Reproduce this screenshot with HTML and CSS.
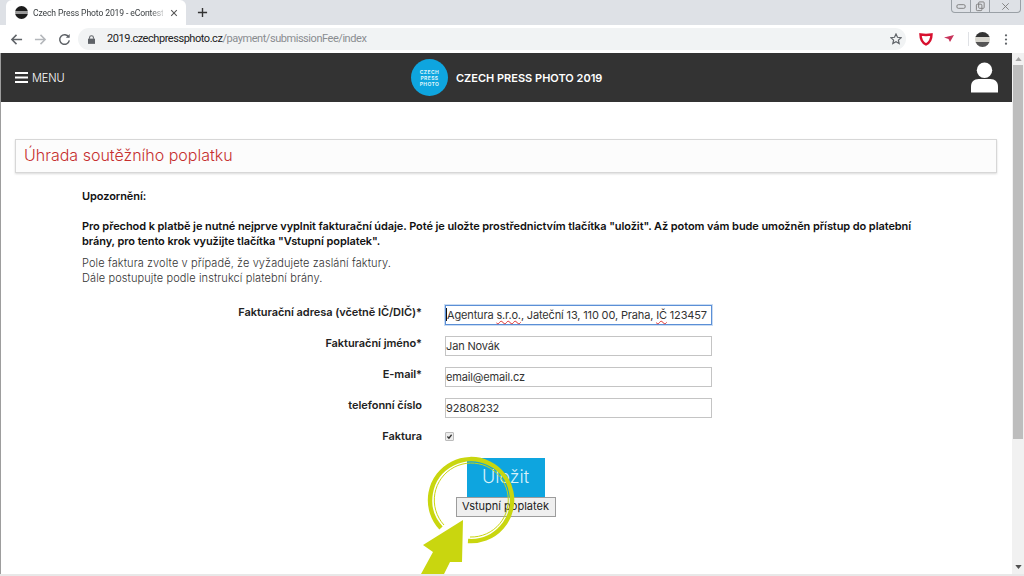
FILE: index.html
```html
<!DOCTYPE html>
<html lang="cs">
<head>
<meta charset="utf-8">
<title>Czech Press Photo 2019 - eContest</title>
<link rel="stylesheet" href="styles.css">
</head>
<body>
<div class="tabstrip">
  <div class="tab">
    <span class="favicon"></span>
    <span class="tab-title">Czech Press Photo 2019 - eContest</span>
    <svg class="tab-close" viewBox="0 0 10 10"><path d="M1.500 1.500l7 7M8.500 1.500l-7 7"/></svg>
  </div>
  <svg class="new-tab" viewBox="0 0 12 12"><path d="M6 1v10M1 6h10"/></svg>
  <div class="win-controls">
    <span class="win-btn"><svg viewBox="0 0 12 8"><rect x="1" y="2" width="9" height="4" rx="1.500"/></svg></span>
    <span class="win-btn"><svg viewBox="0 0 12 12"><rect x="4" y="1" width="6" height="7" rx="1"/><rect x="1.500" y="3.500" width="6" height="7" rx="1"/></svg></span>
    <span class="win-btn win-close"><svg viewBox="0 0 12 12"><path d="M2.500 2.500l7 7M9.500 2.500l-7 7"/></svg></span>
  </div>
</div>
<div class="toolbar">
  <svg class="nav-icon" viewBox="0 0 14 14"><path d="M13 7H2M7 2L2 7l5 5"/></svg>
  <svg class="nav-icon nav-off" viewBox="0 0 14 14"><path d="M1 7h11M7 2l5 5-5 5"/></svg>
  <svg class="nav-icon" viewBox="0 0 14 14"><path d="M11.600 4.400A5.200 5.200 0 1 0 12.200 8"/><path class="fill" d="M8.400 5.200h4.200V1z"/></svg>
  <div class="omnibox">
    <svg class="lock" viewBox="0 0 8 10"><path d="M0 4h8v6H0z"/><path class="lock-arc" d="M1.800 4V2.800a2.200 2.200 0 0 1 4.400 0V4"/></svg>
    <span class="url"><span class="url-host">2019.czechpressphoto.cz</span>/payment/submissionFee/index</span>
    <svg class="star" viewBox="0 0 12 12"><path d="M6 1l1.500 3.300 3.600.4-2.700 2.400.8 3.500L6 8.800l-3.200 1.800.8-3.500L.9 4.700l3.600-.4z"/></svg>
  </div>
  <div class="extensions">
    <svg class="ext-shield" viewBox="0 0 14 14"><path d="M1.500 2.500c3 .5 8 .5 11 0 0 5-1.500 8-5.500 10-4-2-5.500-5-5.500-10z"/></svg>
    <svg class="ext-plane" viewBox="0 0 10 8"><path d="M0 2.500L10 0 6 7 4.500 4z"/></svg>
    <span class="ext-sep"></span>
    <span class="avatar"></span>
    <svg class="kebab" viewBox="0 0 4 14"><circle cx="2" cy="2.500" r="1.200"/><circle cx="2" cy="7" r="1.200"/><circle cx="2" cy="11.500" r="1.200"/></svg>
  </div>
</div>
<div class="viewport">
  <div class="page">
    <header class="site-header">
      <div class="menu">
        <svg class="burger" viewBox="0 0 13 11"><path d="M0 0h13v2H0zM0 4.500h13v2H0zM0 9h13v2H0z"/></svg>
        <span>MENU</span>
      </div>
      <div class="brand">
        <span class="brand-logo">CZECH<br>PRESS<br>PHOTO</span>
        <span class="brand-name">CZECH PRESS PHOTO 2019</span>
      </div>
      <svg class="user" viewBox="0 0 28 31"><circle cx="14" cy="8" r="8"/><path d="M0 31v-6c0-5 3-8 8-8h12c5 0 8 3 8 8v6z"/></svg>
    </header>
    <main class="content">
      <h1 class="title-box">Úhrada soutěžního poplatku</h1>
      <section class="notice">
        <p class="strong first">Upozornění:</p>
        <p class="strong warn">Pro přechod k platbě je nutné nejprve vyplnit fakturační údaje. Poté je uložte prostřednictvím tlačítka "uložit". Až potom vám bude umožněn přístup do platební brány, pro tento krok využijte tlačítka "Vstupní poplatek".</p>
        <p class="info">Pole faktura zvolte v případě, že vyžadujete zaslání faktury.<br>Dále postupujte podle instrukcí platební brány.</p>
      </section>
      <form class="form">
        <label class="label">Fakturační adresa (včetně IČ/DIČ)*</label>
        <div class="field field-focus"><span class="caret"></span>Agentura <span class="typo">s.r.o.</span>, Jateční 13, 110 00, Praha, <span class="typo">IČ</span> 123457</div>
        <label class="label">Fakturační jméno*</label>
        <div class="field">Jan Novák</div>
        <label class="label">E-mail*</label>
        <div class="field">email@email.cz</div>
        <label class="label">telefonní číslo</label>
        <div class="field">92808232</div>
        <label class="label">Faktura</label>
        <div class="check-cell"><span class="check"><svg viewBox="0 0 10 10"><path d="M2 5l2.200 2.500L8 2.500"/></svg></span></div>
      </form>
      <div class="actions">
        <span class="btn-save">Uložit</span>
        <span class="btn-fee">Vstupní poplatek</span>
      </div>
    </main>
    <svg class="annotation" viewBox="0 0 140 134">
      <path class="ring-thick" d="M41 88A41 41 0 1 1 68 101"/>
      <path class="ring-thin" d="M44 85A37 37 0 1 1 70 97"/>
      <path class="arrow" d="M63 80L62 122 50 122 44 134H21L33 112 23 105z"/>
    </svg>
  </div>
  <div class="scrollbar">
    <svg class="sb-arrow sb-up" viewBox="0 0 8 5"><path d="M4 0l4 5H0z"/></svg>
    <div class="sb-track"><div class="sb-thumb"></div></div>
    <svg class="sb-arrow sb-down" viewBox="0 0 8 5"><path d="M4 5L8 0H0z"/></svg>
  </div>
</div>
<div class="bottom-edge"></div>
</body>
</html>
```
FILE: styles.css
```css
* { box-sizing: border-box; }
html, body { margin: 0; padding: 0; height: 100%; overflow: hidden; }
body { display: flex; flex-direction: column; height: 576px; background: #fff; font-family: "Inter", "Liberation Sans", sans-serif; color: #222; }

.tabstrip { height: 25px; flex: none; background: #dee1e6; display: flex; align-items: flex-end; padding-left: 6px; }
.tab { width: 180px; height: 25px; background: #fff; border-radius: 6px 6px 0 0; display: flex; align-items: center; padding: 0 8px 0 9px; }
.favicon { width: 13px; height: 13px; border-radius: 50%; background: linear-gradient(#1c1c1c 0 38%, #9a9a9a 38% 62%, #1c1c1c 62%); flex: none; margin-right: 5px; }
.tab-title { font: 8.600px/12px "Roboto", sans-serif; letter-spacing: -.12px; color: #3c4043; white-space: nowrap; width: 130px; flex: none; -webkit-mask-image: linear-gradient(90deg, #000 90%, rgba(0,0,0,.25)); mask-image: linear-gradient(90deg, #000 90%, rgba(0,0,0,.25)); }
.tab-close { width: 8px; height: 8px; margin-left: 7px; flex: none; }
.tab-close path { stroke: #555; stroke-width: 1.3; fill: none; }
.new-tab { width: 11px; height: 11px; margin: 0 0 7px 11px; flex: none; }
.new-tab path { stroke: #333; stroke-width: 1.5; fill: none; }
.win-controls { margin-left: auto; margin-right: 3px; align-self: flex-start; display: flex; height: 13px; border: 1px solid #9aa0a6; border-top: 0; border-radius: 0 0 4px 4px; }
.win-btn { width: 19px; display: flex; align-items: center; justify-content: center; border-right: 1px solid #9aa0a6; }
.win-close { width: 30px; border-right: 0; }
.win-btn svg { width: 11px; height: 11px; fill: none; stroke: #7c7c7c; stroke-width: 1; }

.toolbar { height: 28px; flex: none; background: #fff; display: flex; align-items: center; padding-left: 10px; }
.nav-icon { width: 13px; height: 13px; margin-right: 11px; flex: none; fill: none; stroke: #5f6368; stroke-width: 1.6; }
.nav-icon:nth-of-type(3) { margin-right: 13px; }
.nav-icon .fill { fill: #5f6368; stroke: none; }
.nav-off { stroke: #b4b7bb; }
.omnibox { width: 828px; margin-left: -6px; height: 22px; background: #f1f3f4; border-radius: 11px; display: flex; align-items: center; padding: 0 4px 0 10px; flex: none; }
.lock { width: 7px; height: 9px; flex: none; margin-right: 12px; fill: #5f6368; }
.lock .lock-arc { fill: none; stroke: #5f6368; stroke-width: 1.2; }
.url { font: 11px/14px "Roboto", sans-serif; color: #8a8d91; letter-spacing: -.45px; }
.url-host { color: #222; }
.star { width: 12px; height: 12px; margin-left: auto; fill: none; stroke: #5f6368; stroke-width: 1.2; }
.extensions { display: flex; align-items: center; flex: none; margin-left: 13px; }
.ext-shield { width: 14px; height: 14px; fill: #fff; stroke: #d8102f; stroke-width: 2.4; margin-right: 11px; }
.ext-plane { width: 10px; height: 8px; fill: #c8335a; margin-right: 14px; }
.ext-sep { width: 1px; height: 14px; background: #dfe1e5; margin-right: 9px; }
.avatar { width: 15px; height: 15px; border-radius: 50%; background: linear-gradient(#333 0 35%, #d8d6cf 35% 65%, #555 65%); margin-right: 14px; margin-left: -3px; }
.kebab { width: 4px; height: 13px; fill: #5f6368; }

.viewport { flex: 1; min-height: 0; display: flex; }
.page { flex: 1; min-width: 0; position: relative; border-left: 1px solid #9d9d9d; overflow: hidden; }
.scrollbar { width: 12px; flex: none; background: #f1f1f1; display: flex; flex-direction: column; align-items: center; padding: 4px 0 5px; }
.sb-arrow { width: 7px; height: 4px; flex: none; }
.sb-up { fill: #a3a3a3; }
.sb-down { fill: #505050; }
.sb-track { flex: 1; width: 100%; padding: 4px 1px; }
.sb-thumb { height: 374px; background: #bdbdbd; }
.bottom-edge { height: 2px; flex: none; background: #e8e8e8; }

.site-header { height: 49px; background: #333; margin-left: -1px; display: flex; align-items: center; color: #fff; position: relative; padding: 0 14px 0 15px; }
.menu { display: flex; align-items: center; gap: 4px; font-size: 11px; font-weight: 300; letter-spacing: -.1px; }
.burger { width: 13px; height: 11px; fill: #fff; }
.brand { position: absolute; left: 411px; top: 6px; display: flex; align-items: center; gap: 8px; }
.brand-logo { width: 37px; height: 37px; border-radius: 50%; background: #0ea5df; color: #dff4fb; font-size: 5px; line-height: 6px; font-weight: 700; letter-spacing: .4px; text-align: center; padding-top: 9.500px; }
.brand-name { font-size: 11px; font-weight: 600; }
.user { width: 27px; height: 31px; margin-left: auto; fill: #fff; }

.title-box { margin: 37px 15px 0 14px; height: 34px; border: 1px solid #d7d7d7; box-shadow: 0 1px 2px rgba(0,0,0,.15); background: #fcfcfc; font-size: 16px; line-height: 31px; font-weight: 300; color: #c62f2f; padding-left: 8px; }

.notice { margin: 16px 85px 0 81px; font-size: 11px; line-height: 15px; }
.notice p { margin: 0; }
.strong { font-weight: 600; color: #111; letter-spacing: -.08px; }
.warn { margin-top: 15px !important; }
.info { margin-top: 7px !important; color: #333; font-weight: 300; letter-spacing: .1px; }

.form { display: grid; grid-template-columns: 421px 267px; column-gap: 23px; row-gap: 11px; margin-top: 19px; align-items: start; }
.label { text-align: right; font-size: 11px; font-weight: 600; line-height: 15px; color: #222; letter-spacing: -.05px; }
.field { height: 20px; border: 1px solid #c4c4c4; padding: 0; font-size: 11px; line-height: 19px; color: #333; white-space: nowrap; position: relative; letter-spacing: -.15px; }
.field-focus { border-color: #5b8fd6; box-shadow: 0 0 0 1px #c9dcf3; }
.caret { display: inline-block; width: 1px; height: 13px; background: #111; vertical-align: -2px; }
.typo { text-decoration: underline wavy #d33; text-decoration-thickness: 1px; }
.check-cell { height: 20px; display: flex; align-items: center; }
.check { width: 9px; height: 9px; background: #ececec; border: 1px solid #bbb; border-radius: 1px; display: block; margin-top: -5px; }
.check svg { display: block; width: 7px; height: 7px; fill: none; stroke: #333; stroke-width: 1.8; }

.actions { display: flex; flex-direction: column; align-items: center; margin-top: 9px; margin-right: 2px; }
.btn-save { width: 78px; height: 39px; background: #0ea5df; color: #d9f1fa; font-size: 18px; font-weight: 300; text-align: center; line-height: 38px; }
.btn-fee { width: 100px; height: 20px; background: #efefef; border: 1px solid #9c9c9c; font-size: 11px; text-align: center; line-height: 17px; color: #222; }

.annotation { position: absolute; left: 399px; top: 387px; width: 140px; height: 134px; pointer-events: none; overflow: hidden; }
.ring-thick { fill: none; stroke: #c9d60f; stroke-width: 4.500; }
.ring-thin { fill: none; stroke: #c9d60f; stroke-width: 1; }
.arrow { fill: #c9d60f; }
```
